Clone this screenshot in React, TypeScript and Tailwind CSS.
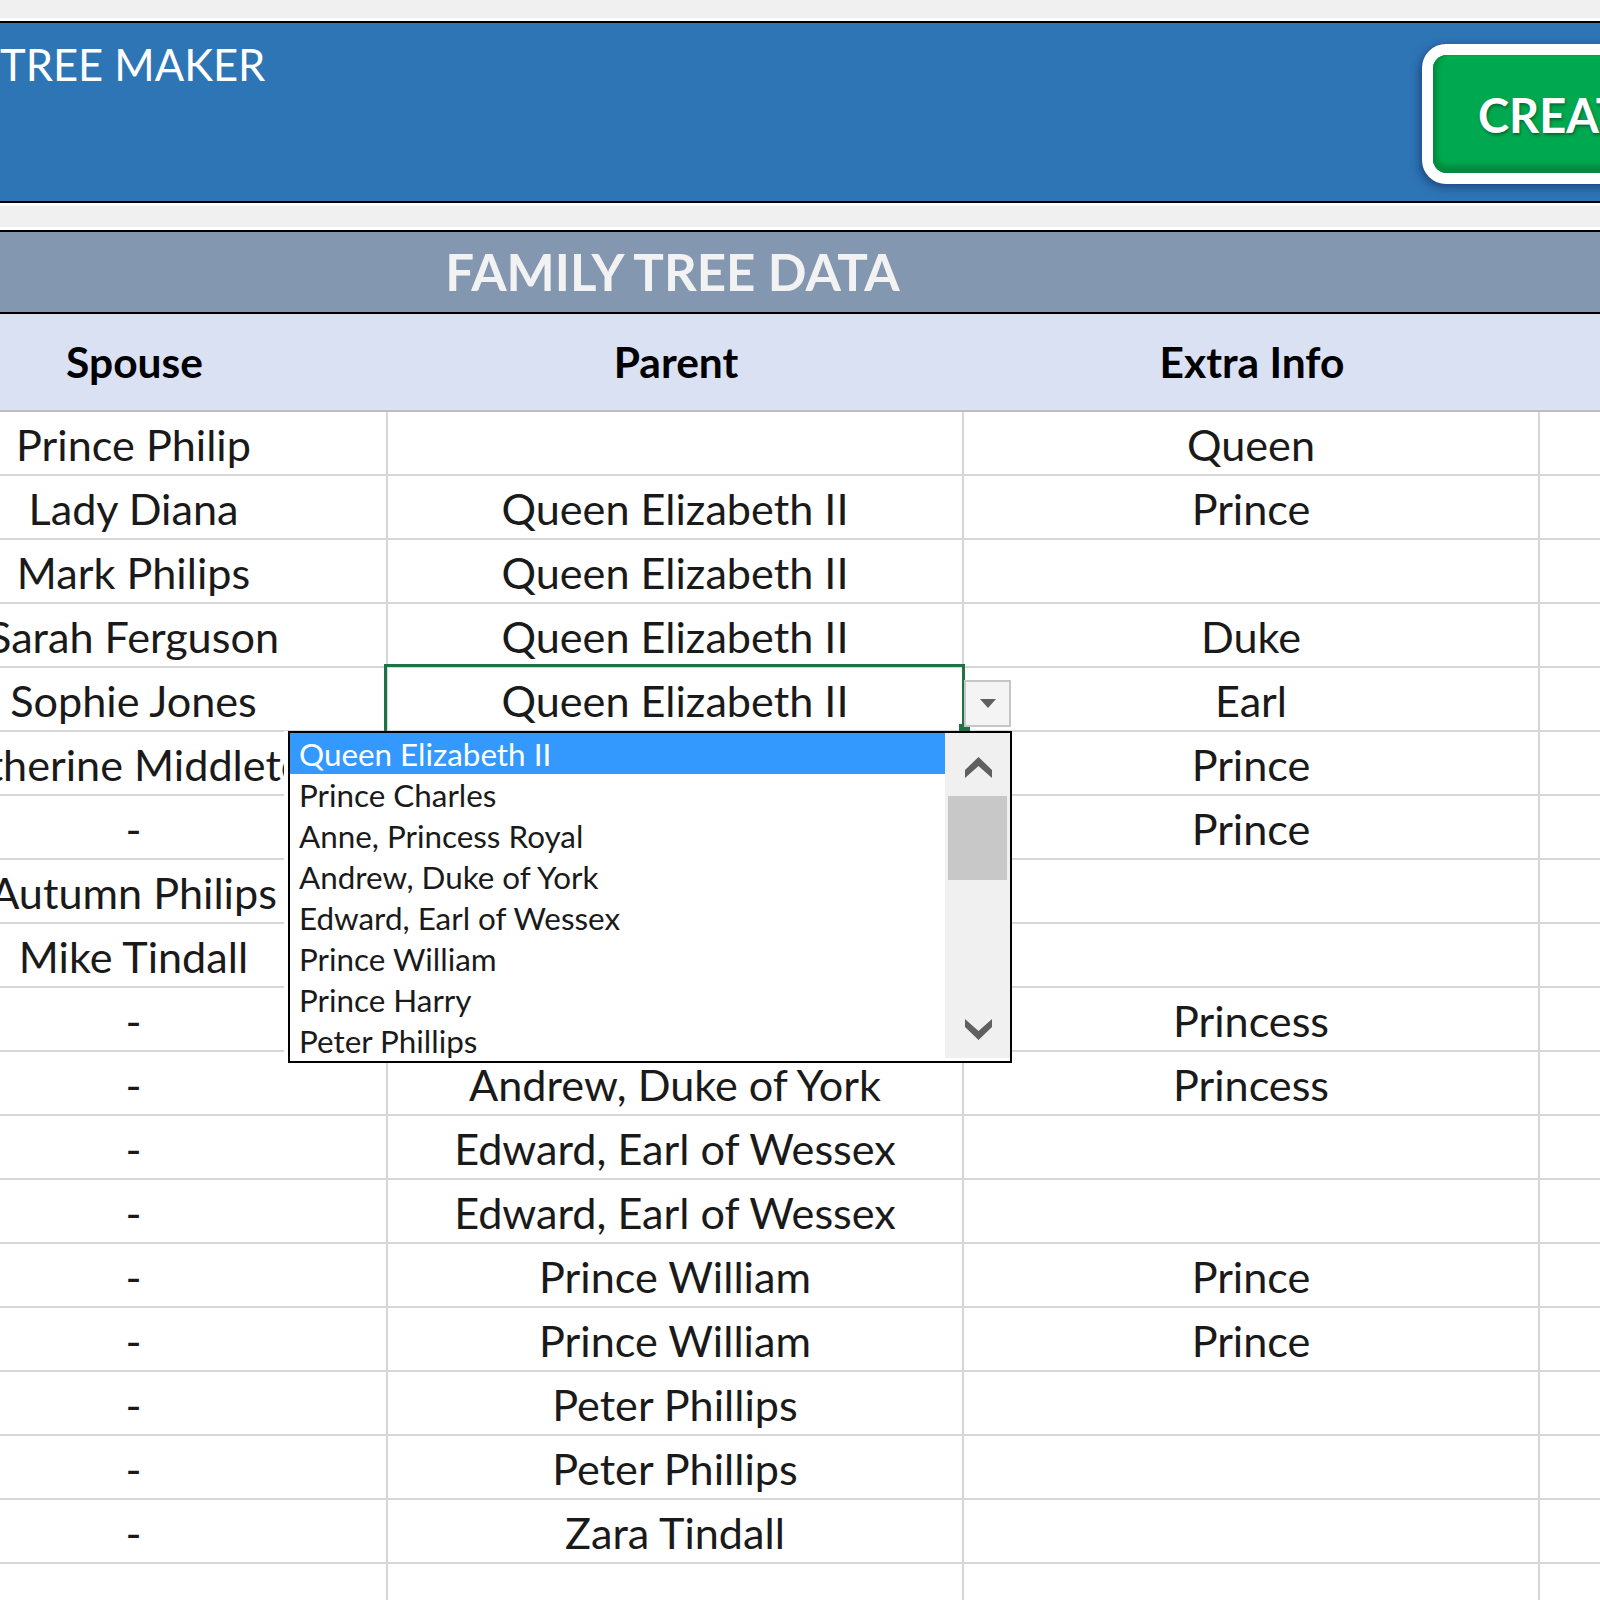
const rows = [
  { spouse: 'Prince Philip', parent: '', info: 'Queen' },
  { spouse: 'Lady Diana', parent: 'Queen Elizabeth II', info: 'Prince' },
  { spouse: 'Mark Philips', parent: 'Queen Elizabeth II', info: '' },
  { spouse: 'Sarah Ferguson', parent: 'Queen Elizabeth II', info: 'Duke' },
  { spouse: 'Sophie Jones', parent: 'Queen Elizabeth II', info: 'Earl', selected: true },
  { spouse: 'Catherine Middleton', parent: 'Prince Charles', info: 'Prince' },
  { spouse: '-', parent: 'Prince Charles', info: 'Prince' },
  { spouse: 'Autumn Philips', parent: 'Anne, Princess Royal', info: '' },
  { spouse: 'Mike Tindall', parent: 'Anne, Princess Royal', info: '' },
  { spouse: '-', parent: 'Andrew, Duke of York', info: 'Princess' },
  { spouse: '-', parent: 'Andrew, Duke of York', info: 'Princess' },
  { spouse: '-', parent: 'Edward, Earl of Wessex', info: '' },
  { spouse: '-', parent: 'Edward, Earl of Wessex', info: '' },
  { spouse: '-', parent: 'Prince William', info: 'Prince' },
  { spouse: '-', parent: 'Prince William', info: 'Prince' },
  { spouse: '-', parent: 'Peter Phillips', info: '' },
  { spouse: '-', parent: 'Peter Phillips', info: '' },
  { spouse: '-', parent: 'Zara Tindall', info: '' },
  { spouse: '', parent: '', info: '' },
]

const options = [
  'Queen Elizabeth II',
  'Prince Charles',
  'Anne, Princess Royal',
  'Andrew, Duke of York',
  'Edward, Earl of Wessex',
  'Prince William',
  'Prince Harry',
  'Peter Phillips',
]

function ParentDropdown() {
  return (
    <div className="absolute left-[288px] top-[731px] z-20 flex h-[332px] w-[724px] border-2 border-black bg-white shadow-[-4px_0_0_#ffffff]">
      <div className="flex-1">
        {options.map((name, i) => (
          <div
            key={name}
            className={`h-[41px] pl-[9px] text-[31.4px] leading-[43px] whitespace-nowrap ${
              i === 0 ? 'bg-[#3399ff] text-white' : 'text-[#1a1a1a]'
            }`}
          >
            {name}
          </div>
        ))}
      </div>
      <div className="flex w-[65px] flex-col bg-[#f0f0f0] mb-[3px]">
        <div className="flex h-[63px] items-start justify-center pl-[2px] pt-[24px]">
          <svg width="27" height="21" viewBox="0 0 27 21" fill="#606060">
            <polygon points="13.5,0 27,13 27,21 13.5,9 0,21 0,13" />
          </svg>
        </div>
        <div className="ml-[3px] mr-[3px] h-[84px] bg-[#c8c8c8]" />
        <div className="flex flex-1 items-end justify-center pb-[18px] pl-[2px]">
          <svg width="27" height="21" viewBox="0 0 27 21" fill="#606060">
            <polygon points="13.5,21 27,8 27,0 13.5,12 0,0 0,8" />
          </svg>
        </div>
      </div>
    </div>
  )
}

export default function App() {
  return (
    <div className="relative h-[1600px] w-[1600px] overflow-hidden bg-white font-['Lato','Liberation_Sans',sans-serif] text-[#1a1a1a]">
      <div className="h-[18px] bg-[#f0f0f0]" />
      <div className="h-[3px]" />

      {/* title band */}
      <div className="flex h-[182px] items-start justify-between border-y-[2px] border-black bg-[#2e75b6]">
        <div className="pt-[13px] text-[43.5px] leading-[56px] text-white whitespace-nowrap">TREE MAKER</div>
        <div className="mt-[21px] h-[140px] w-[200px] shrink-0 -mr-[22px] rounded-l-[24px] bg-white p-[11px] pr-0 shadow-[-2px_3px_10px_rgba(20,50,100,0.7)]">
          <div className="h-[118px] overflow-hidden rounded-l-[14px] bg-[#00a84f] pl-[45px] text-[47px] font-bold leading-[120px] text-white whitespace-nowrap shadow-[inset_4px_0_4px_#058a41,inset_0_-8px_4px_#058a41,inset_0_4px_2px_#00b84f] [text-shadow:1px_2px_3px_rgba(0,80,40,0.7)]">
            CREATE TREE
          </div>
        </div>
      </div>

      <div className="h-[3px]" />
      <div className="h-[21px] bg-[#f0f0f0]" />
      <div className="h-[3px]" />

      {/* section band */}
      <div className="-ml-[119px] grid h-[84px] w-[1719px] grid-cols-[506px_575px_638px] items-center border-y-[2px] border-black bg-[#8497b0]">
        <div className="col-start-2 flex justify-center pr-[4px] text-[51px] font-bold text-[#f2f2f2] whitespace-nowrap">
          FAMILY TREE DATA
        </div>
      </div>

      {/* column headers */}
      <div className="-ml-[119px] grid h-[98px] w-[1719px] grid-cols-[507px_576px_576px_60px] items-center border-b-[2px] border-[#bdbdbd] bg-[#dae1f3] text-[42.5px] font-bold text-black">
        <div className="text-center">Spouse</div>
        <div className="text-center">Parent</div>
        <div className="text-center">Extra Info</div>
      </div>

      {/* data rows */}
      <div className="-ml-[119px] w-[1719px]">
        {rows.map((row, i) => (
          <div key={i} className="grid h-[64px] grid-cols-[507px_576px_576px_60px] text-[43.2px] leading-[60px]">
            <div className="overflow-hidden border-r-2 border-b-2 border-[#d6d6d6] pt-[2px] text-center whitespace-nowrap">
              <div className="flex justify-center">{row.spouse}</div>
            </div>
            <div className="relative border-r-2 border-b-2 border-[#d6d6d6] pt-[2px] text-center whitespace-nowrap">
              {row.parent}
              {row.selected && (
                <>
                  <div className="absolute -top-[4px] -left-[4px] -right-[3px] -bottom-[6px] border-[3px] border-[#1f7246]" />
                  <div className="absolute -bottom-[6px] -right-[8px] h-[12px] w-[11px] bg-[#1f7246]" />
                  <div className="absolute top-[12px] -right-[49px] flex h-[47px] w-[47px] items-center justify-center border-2 border-[#c6c6c6] bg-[#f4f4f4]">
                    <div className="h-0 w-0 border-x-[8px] border-t-[9px] border-x-transparent border-t-[#606060]" />
                  </div>
                </>
              )}
            </div>
            <div className="border-r-2 border-b-2 border-[#d6d6d6] pt-[2px] text-center whitespace-nowrap">{row.info}</div>
            <div className="border-b-2 border-[#d6d6d6]" />
          </div>
        ))}
      </div>

      <ParentDropdown />
    </div>
  )
}
